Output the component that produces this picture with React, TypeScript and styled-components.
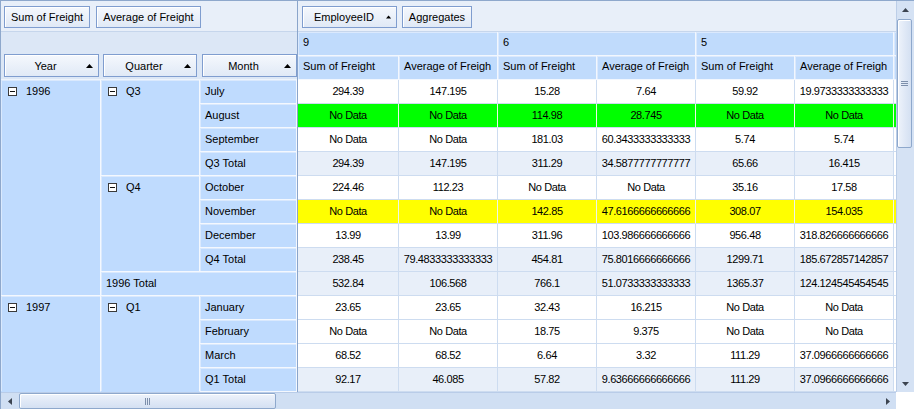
import React from "react";
import styled, { createGlobalStyle } from "styled-components";

const GlobalStyle = createGlobalStyle`
  html, body { margin: 0; padding: 0; background: #ffffff; }
  body { font-family: "Liberation Sans", Arial, sans-serif; font-size: 11px; color: #000; }
  * { box-sizing: border-box; }
`;

const Frame = styled.div`
  width: 914px;
  height: 409px;
  border-top: 1px solid #8ea8cc;
  border-left: 1px solid #8ea8cc;
  display: grid;
  grid-template-columns: 895px 18px;
  grid-template-rows: 391px 17px;
  background: #e6eef9;
  overflow: hidden;
`;

const GridArea = styled.div`
  display: flex;
  overflow: hidden;
`;

const LeftPane = styled.div`
  width: 296px;
  flex: none;
  display: flex;
  flex-direction: column;
  overflow: hidden;
`;

const Divider = styled.div`
  width: 1px;
  flex: none;
  background: #8aa5cb;
`;

const RightPane = styled.div`
  flex: 1;
  min-width: 0;
  display: flex;
  flex-direction: column;
  overflow: hidden;
`;

const TopStrip = styled.div<{ $pad: number; $gap: number }>`
  height: 31px;
  flex: none;
  display: flex;
  align-items: flex-start;
  padding: 5px 0 0 ${(p) => p.$pad}px;
  gap: ${(p) => p.$gap}px;
  background: #e8eff9;
  border-bottom: 1px solid #c6d6ec;
`;

const FieldButton = styled.div<{ $w: number; $h?: number; $ml?: number }>`
  width: ${(p) => p.$w}px;
  height: ${(p) => p.$h ?? 22}px;
  margin-left: ${(p) => p.$ml ?? 0}px;
  flex: none;
  display: flex;
  align-items: center;
  justify-content: center;
  border: 1px solid #7f9dcf;
  background: linear-gradient(#f5f8fd, #e0e9f6);
  box-shadow: inset 1px 1px 0 #ffffff;
  white-space: nowrap;
  color: #000;
`;

const SortButton = styled(FieldButton)`
  justify-content: flex-start;
  padding-right: 5px;
`;

const SortLabel = styled.span<{ $center?: boolean }>`
  flex: ${(p) => (p.$center ? 1 : "none")};
  text-align: center;
  padding-left: ${(p) => (p.$center ? 0 : 11)}px;
  padding-right: ${(p) => (p.$center ? 0 : 12)}px;
`;

const FieldZone = styled.div`
  height: 48px;
  flex: none;
  display: flex;
  align-items: flex-end;
  padding-bottom: 2px;
  background: #dce7f6;
  border-bottom: 1px solid #eef4fc;
`;

const ColHeaderGrid = styled.div`
  height: 48px;
  flex: none;
  display: grid;
  grid-template-columns: 101px repeat(5, 99px) 1fr;
  grid-template-rows: 24px 24px;
  background: #e8eff9;
`;

const HeaderCell = styled.div<{ $span?: number }>`
  grid-column: span ${(p) => p.$span ?? 1};
  background: #c0dbfc;
  border-right: 1px solid #f2f7fe;
  border-bottom: 1px solid #f2f7fe;
  box-shadow: inset 1px 1px 0 #dbe9fd;
  padding-left: 5px;
  line-height: 21px;
  white-space: nowrap;
  overflow: hidden;
`;

const RowHeaderGrid = styled.div`
  flex: 1;
  display: grid;
  grid-template-columns: 100px 99px 97px;
  grid-template-rows: repeat(13, 24px);
  overflow: hidden;
  background: #bfdbfe;
`;

const RowCell = styled.div<{ $col: string; $row: string; $open?: boolean }>`
  grid-column: ${(p) => p.$col};
  grid-row: ${(p) => p.$row};
  background: #bfdbfe;
  border-right: 1px solid #f4f8fe;
  border-bottom: 1px solid ${(p) => (p.$open ? "#bfdbfe" : "#f4f8fe")};
  box-shadow: inset 1px 1px 0 #dae9fd;
  padding-left: 5px;
  line-height: 23px;
  white-space: nowrap;
  overflow: hidden;
`;

const GroupLabel = styled.div`
  display: flex;
  align-items: center;
  gap: 9px;
  height: 23px;
  padding-left: 2px;
`;

const DataGrid = styled.div`
  flex: 1;
  display: grid;
  grid-template-columns: 101px repeat(5, 99px) 1fr;
  grid-auto-rows: 24px;
  overflow: hidden;
  background: #ffffff;
`;

type Tone = "plain" | "total" | "green" | "yellow";

const toneBg: Record<Tone, string> = {
  plain: "#ffffff",
  total: "#e8eff9",
  green: "#00ff00",
  yellow: "#ffff00",
};

const DataCell = styled.div<{ $tone: Tone }>`
  background: ${(p) => toneBg[p.$tone]};
  border-right: 1px solid ${(p) => (p.$tone === "green" || p.$tone === "yellow" ? "#eef4ea" : "#cddcf0")};
  border-bottom: 1px solid #cddcf0;
  text-align: center;
  line-height: 23px;
  letter-spacing: -0.4px;
  white-space: nowrap;
  overflow: hidden;
`;

const FillerCell = styled.div<{ $tone: Tone }>`
  background: ${(p) => (p.$tone === "plain" || p.$tone === "total" ? "#ffffff" : toneBg[p.$tone])};
  border-bottom: 1px solid #cddcf0;
`;

const VScroll = styled.div`
  grid-column: 2;
  grid-row: 1;
  background: #d5e2f4;
  border-left: 1px solid #bccee8;
  display: flex;
  flex-direction: column;
`;

const ArrowBox = styled.div<{ $w?: number; $h?: number }>`
  width: ${(p) => (p.$w ? `${p.$w}px` : "100%")};
  height: ${(p) => (p.$h ? `${p.$h}px` : "100%")};
  flex: none;
  display: flex;
  align-items: center;
  justify-content: center;
`;

const VThumb = styled.div`
  width: 15px;
  height: 129px;
  margin-top: 1px;
  flex: none;
  border: 1px solid #8ea8cc;
  border-radius: 2px;
  background: linear-gradient(to right, #eef3fb, #dfe8f6 55%, #d4e0f2);
  box-shadow: inset 1px 1px 0 #ffffff;
  display: flex;
  align-items: center;
  justify-content: center;
`;

const Spacer = styled.div`
  flex: 1;
`;

const HScroll = styled.div`
  grid-column: 1;
  grid-row: 2;
  background: #d0dff3;
  border-top: 1px solid #b9cce8;
  display: flex;
  align-items: stretch;
`;

const HThumb = styled.div`
  width: 257px;
  margin: 0 0 0 1px;
  flex: none;
  border: 1px solid #8ea8cc;
  border-radius: 2px;
  background: linear-gradient(#eef3fb, #dfe8f6 55%, #d4e0f2);
  box-shadow: inset 1px 1px 0 #ffffff;
  display: flex;
  align-items: center;
  justify-content: center;
`;

const Corner = styled.div`
  grid-column: 2;
  grid-row: 2;
  background: #ffffff;
`;

const SortArrow = () => (
  <svg width="7" height="4" viewBox="0 0 7 4">
    <polygon points="0,4 3.5,0 7,4" fill="#000" />
  </svg>
);

const Minus = () => (
  <svg width="9" height="9" viewBox="0 0 9 9">
    <rect x="0.5" y="0.5" width="8" height="8" fill="#ffffff" stroke="#3a3a3a" />
    <line x1="2" y1="4.5" x2="7" y2="4.5" stroke="#111" />
  </svg>
);

const Tri = ({ dir }: { dir: "up" | "down" | "left" | "right" }) => {
  const pts = {
    up: "0,4 3.5,0 7,4",
    down: "0,0 7,0 3.5,4",
    left: "4,0 4,7 0,3.5",
    right: "0,0 4,3.5 0,7",
  }[dir];
  const vertical = dir === "up" || dir === "down";
  return (
    <svg width={vertical ? 7 : 4} height={vertical ? 4 : 7} viewBox={vertical ? "0 0 7 4" : "0 0 4 7"}>
      <polygon points={pts} fill="#3c4450" />
    </svg>
  );
};

const Gripper = ({ vertical }: { vertical: boolean }) =>
  vertical ? (
    <svg width="7" height="6" viewBox="0 0 7 6">
      {[0.5, 2.5, 4.5].map((y) => (
        <line key={y} x1="0" y1={y} x2="7" y2={y} stroke="#7d8fab" />
      ))}
    </svg>
  ) : (
    <svg width="6" height="7" viewBox="0 0 6 7">
      {[0.5, 2.5, 4.5].map((x) => (
        <line key={x} x1={x} y1="0" x2={x} y2="7" stroke="#7d8fab" />
      ))}
    </svg>
  );

type Row = { tone: Tone; values: string[] };

const ND = "No Data";

const rows: Row[] = [
  { tone: "plain", values: ["294.39", "147.195", "15.28", "7.64", "59.92", "19.9733333333333"] },
  { tone: "green", values: [ND, ND, "114.98", "28.745", ND, ND] },
  { tone: "plain", values: [ND, ND, "181.03", "60.3433333333333", "5.74", "5.74"] },
  { tone: "total", values: ["294.39", "147.195", "311.29", "34.5877777777777", "65.66", "16.415"] },
  { tone: "plain", values: ["224.46", "112.23", ND, ND, "35.16", "17.58"] },
  { tone: "yellow", values: [ND, ND, "142.85", "47.6166666666666", "308.07", "154.035"] },
  { tone: "plain", values: ["13.99", "13.99", "311.96", "103.986666666666", "956.48", "318.826666666666"] },
  { tone: "total", values: ["238.45", "79.4833333333333", "454.81", "75.8016666666666", "1299.71", "185.672857142857"] },
  { tone: "total", values: ["532.84", "106.568", "766.1", "51.0733333333333", "1365.37", "124.124545454545"] },
  { tone: "plain", values: ["23.65", "23.65", "32.43", "16.215", ND, ND] },
  { tone: "plain", values: [ND, ND, "18.75", "9.375", ND, ND] },
  { tone: "plain", values: ["68.52", "68.52", "6.64", "3.32", "111.29", "37.0966666666666"] },
  { tone: "total", values: ["92.17", "46.085", "57.82", "9.63666666666666", "111.29", "37.0966666666666"] },
];

const months: { label: string; row: number }[] = [
  { label: "July", row: 1 },
  { label: "August", row: 2 },
  { label: "September", row: 3 },
  { label: "Q3 Total", row: 4 },
  { label: "October", row: 5 },
  { label: "November", row: 6 },
  { label: "December", row: 7 },
  { label: "Q4 Total", row: 8 },
  { label: "January", row: 10 },
  { label: "February", row: 11 },
  { label: "March", row: 12 },
  { label: "Q1 Total", row: 13 },
];

const measures = ["Sum of Freight", "Average of Freigh"];

export default function App() {
  return (
    <>
      <GlobalStyle />
      <Frame>
        <GridArea>
          <LeftPane>
            <TopStrip $pad={3} $gap={6}>
              <FieldButton $w={86}>Sum of Freight</FieldButton>
              <FieldButton $w={105}>Average of Freight</FieldButton>
            </TopStrip>
            <FieldZone>
              <SortButton $w={95} $h={23} $ml={3}>
                <SortLabel $center>Year</SortLabel>
                <SortArrow />
              </SortButton>
              <SortButton $w={94} $h={23} $ml={4}>
                <SortLabel $center>Quarter</SortLabel>
                <SortArrow />
              </SortButton>
              <SortButton $w={95} $h={23} $ml={5}>
                <SortLabel $center>Month</SortLabel>
                <SortArrow />
              </SortButton>
            </FieldZone>
            <RowHeaderGrid>
              <RowCell $col="1" $row="1 / span 9">
                <GroupLabel>
                  <Minus />
                  <span>1996</span>
                </GroupLabel>
              </RowCell>
              <RowCell $col="2" $row="1 / span 4">
                <GroupLabel>
                  <Minus />
                  <span>Q3</span>
                </GroupLabel>
              </RowCell>
              <RowCell $col="2" $row="5 / span 4">
                <GroupLabel>
                  <Minus />
                  <span>Q4</span>
                </GroupLabel>
              </RowCell>
              <RowCell $col="2 / span 2" $row="9">
                1996 Total
              </RowCell>
              <RowCell $col="1" $row="10 / span 4" $open>
                <GroupLabel>
                  <Minus />
                  <span>1997</span>
                </GroupLabel>
              </RowCell>
              <RowCell $col="2" $row="10 / span 4" $open>
                <GroupLabel>
                  <Minus />
                  <span>Q1</span>
                </GroupLabel>
              </RowCell>
              {months.map((m) => (
                <RowCell key={m.label} $col="3" $row={String(m.row)}>
                  {m.label}
                </RowCell>
              ))}
            </RowHeaderGrid>
          </LeftPane>
          <Divider />
          <RightPane>
            <TopStrip $pad={4} $gap={5}>
              <SortButton $w={95}>
                <SortLabel>EmployeeID</SortLabel>
                <SortArrow />
              </SortButton>
              <FieldButton $w={70}>Aggregates</FieldButton>
            </TopStrip>
            <ColHeaderGrid>
              <HeaderCell $span={2}>9</HeaderCell>
              <HeaderCell $span={2}>6</HeaderCell>
              <HeaderCell $span={2}>5</HeaderCell>
              <HeaderCell />
              {[0, 1, 2].flatMap((g) =>
                measures.map((m) => <HeaderCell key={`${g}-${m}`}>{m}</HeaderCell>)
              )}
              <HeaderCell />
            </ColHeaderGrid>
            <DataGrid>
              {rows.map((r, i) => (
                <React.Fragment key={i}>
                  {r.values.map((v, j) => (
                    <DataCell key={j} $tone={r.tone}>
                      {v}
                    </DataCell>
                  ))}
                  <FillerCell $tone={r.tone} />
                </React.Fragment>
              ))}
            </DataGrid>
          </RightPane>
        </GridArea>
        <VScroll>
          <ArrowBox $h={17}>
            <Tri dir="up" />
          </ArrowBox>
          <VThumb>
            <Gripper vertical />
          </VThumb>
          <Spacer />
          <ArrowBox $h={17}>
            <Tri dir="down" />
          </ArrowBox>
        </VScroll>
        <HScroll>
          <ArrowBox $w={17}>
            <Tri dir="left" />
          </ArrowBox>
          <HThumb>
            <Gripper vertical={false} />
          </HThumb>
          <Spacer />
          <ArrowBox $w={17}>
            <Tri dir="right" />
          </ArrowBox>
        </HScroll>
        <Corner />
      </Frame>
    </>
  );
}
